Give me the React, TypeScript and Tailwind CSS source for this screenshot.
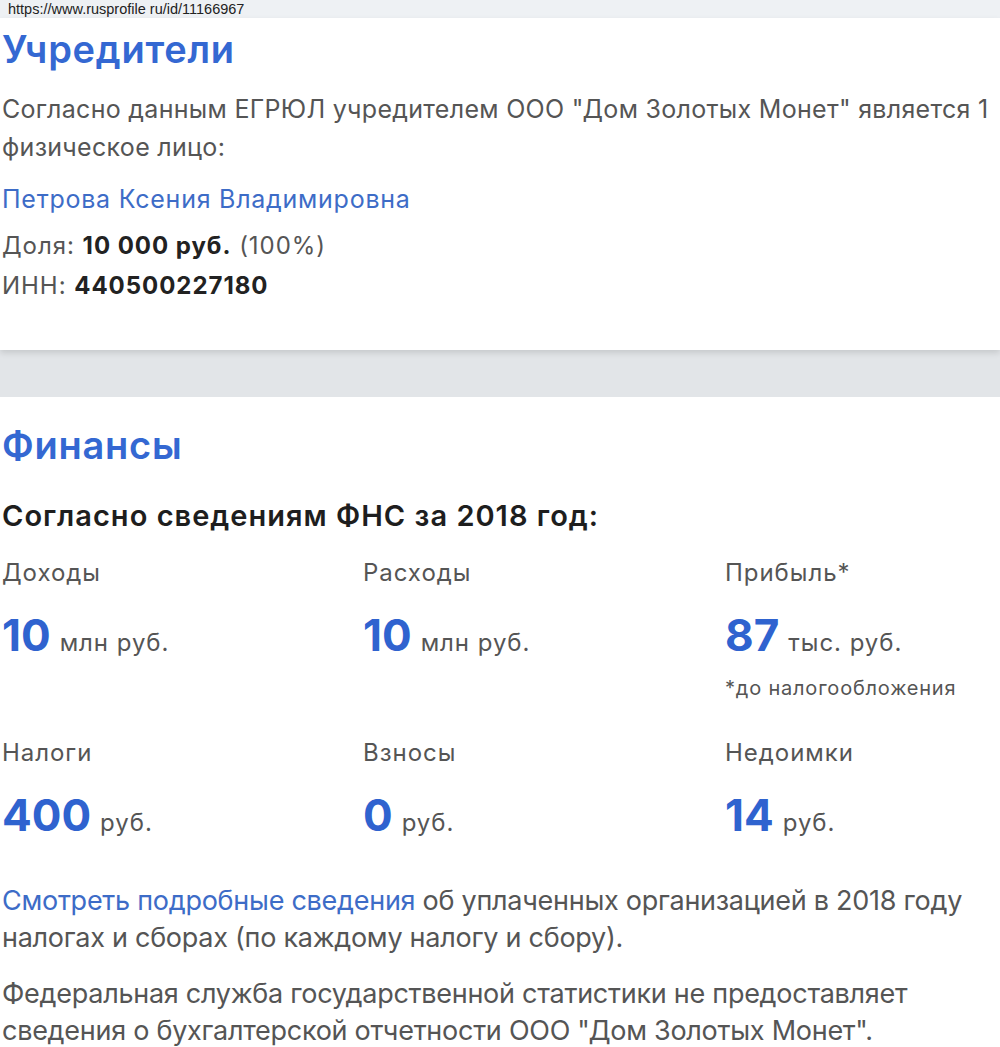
export default function App() {
    const font = { fontFamily: "Inter, 'Noto Sans', sans-serif" };
    return (
        <div className="w-[1000px] h-[1047px] overflow-hidden bg-white text-[#555]" style={font}>
            <div className="h-[18px] bg-[#eef1f4] pl-[8px] text-[14.5px] leading-[18px] text-[#222]" style={{ fontFamily: "'Liberation Sans', sans-serif" }}>
                https://www.rusprofile ru/id/11166967
            </div>
            <section className="h-[332px] bg-white pl-[2px] pt-[10px] shadow-[0_3px_6px_rgba(0,0,0,0.12)] relative">
                <h2 className="text-[38px] leading-[42px] font-semibold tracking-[0.02em] text-[#3468d2]">Учредители</h2>
                <p className="mt-[20px] text-[25px] leading-[38px] tracking-[0.012em] whitespace-nowrap">
                    Согласно данным ЕГРЮЛ учредителем ООО "Дом Золотых Монет" является 1
                    <br />
                    физическое лицо:
                </p>
                <a className="block mt-[18px] text-[25px] leading-[30px] tracking-[0.03em] text-[#3d6cc7]">Петрова Ксения Владимировна</a>
                <div className="mt-[12px] text-[24px] leading-[40px] tracking-[0.04em]">
                    <div>
                        Доля: <b className="font-bold text-[#222]">10 000 руб.</b> (100%)
                    </div>
                    <div>
                        ИНН: <b className="font-bold text-[#222]">440500227180</b>
                    </div>
                </div>
            </section>
            <div className="h-[47px] bg-[#e2e5e8]" />
            <section className="pl-[2px] pt-[26px]">
                <h2 className="text-[38px] leading-[44px] font-semibold tracking-[0.02em] text-[#3468d2]">Финансы</h2>
                <p className="mt-[32px] text-[29px] leading-[34px] font-semibold tracking-[0.035em] text-[#1e1e1e]">
                    Согласно сведениям ФНС за 2018 год:
                </p>
                <div className="mt-[25px] grid grid-cols-[361px_362px_1fr] text-[24px] tracking-[0.04em]">
                    <Stat label="Доходы" value="10" unit="млн руб." tall />
                    <Stat label="Расходы" value="10" unit="млн руб." tall />
                    <Stat label="Прибыль*" value="87" unit="тыс. руб." note="*до налогообложения" tall />
                    <Stat label="Налоги" value="400" unit="руб." />
                    <Stat label="Взносы" value="0" unit="руб." />
                    <Stat label="Недоимки" value="14" unit="руб." />
                </div>
                <div className="mt-[35px] text-[27px] leading-[37px] tracking-[-0.01em]">
                    <p>
                        <a className="text-[#3d6cc7]">Смотреть подробные сведения</a> об уплаченных организацией в 2018 году
                        <br />
                        налогах и сборах (по каждому налогу и сбору).
                    </p>
                    <p className="mt-[19px]">
                        Федеральная служба государственной статистики не предоставляет
                        <br />
                        сведения о бухгалтерской отчетности ООО "Дом Золотых Монет".
                    </p>
                </div>
            </section>
        </div>
    );
}

function Stat({ label, value, unit, note, tall }: { label: string; value: string; unit: string; note?: string; tall?: boolean }) {
    return (
        <div className={tall ? "h-[180px]" : ""}>
            <div className="leading-[30px]">{label}</div>
            <div className="mt-[23px] flex items-baseline gap-[9px] leading-[48px]">
                <span className="text-[44px] font-bold tracking-normal text-[#2f63cf]">{value}</span>
                <span>{unit}</span>
            </div>
            {note && <div className="mt-[9px] text-[20px] leading-[24px] tracking-[0.04em]">{note}</div>}
        </div>
    );
}
